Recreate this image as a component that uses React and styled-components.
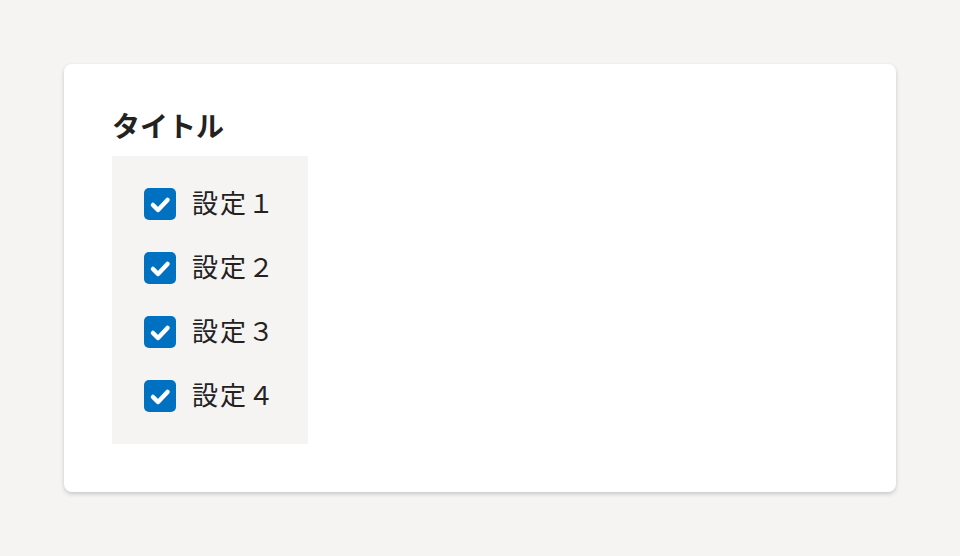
import React, { useState } from "react"
import styled, { createGlobalStyle } from "styled-components"

const GlobalStyle = createGlobalStyle`
  html, body {
    margin: 0;
    background: #f5f4f2;
    font-family: "Noto Sans CJK JP", "Noto Sans", sans-serif;
    color: #23221f;
  }
`

const Page = styled.div`
  padding: 64px;
`

const Card = styled.section`
  background: #ffffff;
  border-radius: 8px;
  box-shadow: 0 2px 4px rgba(0, 0, 0, 0.18);
  padding: 48px;
`

const Title = styled.h2`
  margin: 0 0 16px;
  font-size: 28px;
  line-height: 26px;
  padding-bottom: 2px;
  font-weight: 700;
`

const Group = styled.div`
  display: inline-flex;
  flex-direction: column;
  gap: 32px;
  padding: 32px;
  background: #f5f4f2;
`

const Row = styled.label`
  display: flex;
  align-items: center;
  gap: 16px;
  height: 32px;
  cursor: pointer;
`

const Box = styled.span`
  display: flex;
  align-items: center;
  justify-content: center;
  width: 32px;
  height: 32px;
  border-radius: 5px;
  background: ${({ checked }) => (checked ? "#0071c1" : "#ffffff")};
  border: ${({ checked }) => (checked ? "none" : "2px solid #8a8883")};
  box-sizing: border-box;
`

const Label = styled.span`
  font-size: 26px;
  line-height: 28px;
  padding-bottom: 4px;
  letter-spacing: 2px;
  white-space: nowrap;
`

const Check = () => (
  <svg width="32" height="32" viewBox="0 0 32 32">
    <path
      d="M9 17l5 5 9.5-10"
      fill="none"
      stroke="#fff"
      strokeWidth="4.5"
      strokeLinecap="round"
      strokeLinejoin="round"
    />
  </svg>
)

const items = ["設定１", "設定２", "設定３", "設定４"]

const App = () => {
  const [checked, setChecked] = useState([true, true, true, true])
  const toggle = i => setChecked(c => c.map((v, j) => (j === i ? !v : v)))

  return (
    <>
      <GlobalStyle />
      <Page>
        <Card>
          <Title>タイトル</Title>
          <Group>
            {items.map((text, i) => (
              <Row key={text} onClick={() => toggle(i)}>
                <Box checked={checked[i]}>{checked[i] && <Check />}</Box>
                <Label>{text}</Label>
              </Row>
            ))}
          </Group>
        </Card>
      </Page>
    </>
  )
}

export default App
